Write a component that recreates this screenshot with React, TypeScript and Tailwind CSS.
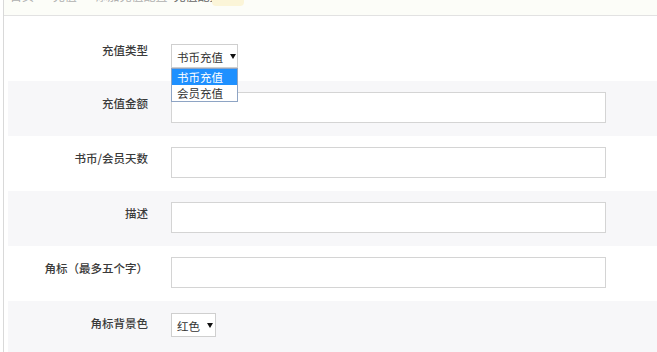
import React from "react";

const font = { fontFamily: '"Noto Sans CJK SC", "Noto Sans", sans-serif' };

function Label({ children, top }: { children: React.ReactNode; top: string }) {
  return (
    <div className={`w-[140px] shrink-0 text-right text-[11.5px] leading-[17px] font-medium text-[#3a3a3a] whitespace-nowrap ${top}`}>
      {children}
    </div>
  );
}

function TextInput({ top }: { top: string }) {
  return (
    <div className={`ml-[23px] ${top}`}>
      <div className="w-[435px] h-[31px] bg-white border border-[#d4d4d4]" />
    </div>
  );
}

function Arrow() {
  return (
    <span className="ml-[7px] inline-block w-0 h-0 border-l-[3px] border-r-[3px] border-t-[5px] border-l-transparent border-r-transparent border-t-[#111]" />
  );
}

export default function App() {
  return (
    <div className="w-[657px] h-[352px] overflow-hidden bg-white pl-[3px]" style={font}>
      <div className="h-full border-l border-[#d9d9d9] flex flex-col">
        {/* header (cut off) */}
        <div className="relative h-[16px] shrink-0 bg-[#fcfdf8] border-b border-[#e2e2e2] overflow-hidden">
          <div className="absolute left-[6px] top-[-12px] flex gap-[6px] text-[12px] leading-[16px] text-[#b0b0b0] whitespace-nowrap">
            <span>首页</span>
            <span>&gt;</span>
            <span>充值</span>
            <span>&gt;</span>
            <span>添加充值配置</span>
            <span className="text-[#666]">充值配置</span>
          </div>
          <div className="absolute left-[208px] top-0 w-[32px] h-[6px] rounded-b-[4px] bg-[#fbf5d8]" />
        </div>

        <div className="flex-1 pl-[4px] flex flex-col">
          {/* row 1 */}
          <div className="relative flex h-[65px] shrink-0 bg-white">
            <Label top="pt-[26px]">充值类型</Label>
            <div className="ml-[23px] mt-[28px] relative z-10">
              <div className="w-[67px] h-[24px] bg-white border border-[#cfcfcf] flex items-center pl-[5px] pt-[1px] text-[11.5px] leading-[16px] text-[#333] whitespace-nowrap">
                <span>书币充值</span>
                <Arrow />
              </div>
              <div className="absolute left-0 top-[24px] w-[67px] bg-white border border-[#8ea4c4] text-[11.5px] leading-[16px] whitespace-nowrap">
                <div className="bg-[#1e90ff] text-white pl-[5px] h-[16px]">书币充值</div>
                <div className="text-[#333] pl-[5px] h-[16px]">会员充值</div>
              </div>
            </div>
          </div>

          {/* row 2 */}
          <div className="flex h-[55px] shrink-0 bg-[#f7f7f9]">
            <Label top="pt-[14px]">充值金额</Label>
            <TextInput top="mt-[11px]" />
          </div>

          {/* row 3 */}
          <div className="flex h-[55px] shrink-0 bg-white">
            <Label top="pt-[14px]">书币/会员天数</Label>
            <TextInput top="mt-[11px]" />
          </div>

          {/* row 4 */}
          <div className="flex h-[55px] shrink-0 bg-[#f7f7f9]">
            <Label top="pt-[14px]">描述</Label>
            <TextInput top="mt-[11px]" />
          </div>

          {/* row 5 */}
          <div className="flex h-[55px] shrink-0 bg-white">
            <Label top="pt-[14px]">角标（最多五个字）</Label>
            <TextInput top="mt-[11px]" />
          </div>

          {/* row 6 */}
          <div className="flex flex-1 bg-[#f7f7f9]">
            <Label top="pt-[14px]">角标背景色</Label>
            <div className="ml-[23px] mt-[12px]">
              <div className="w-[45px] h-[24px] bg-white border border-[#cfcfcf] flex items-center pl-[5px] pt-[1px] text-[11.5px] leading-[16px] text-[#333] whitespace-nowrap">
                <span>红色</span>
                <Arrow />
              </div>
            </div>
          </div>
        </div>
      </div>
    </div>
  );
}
